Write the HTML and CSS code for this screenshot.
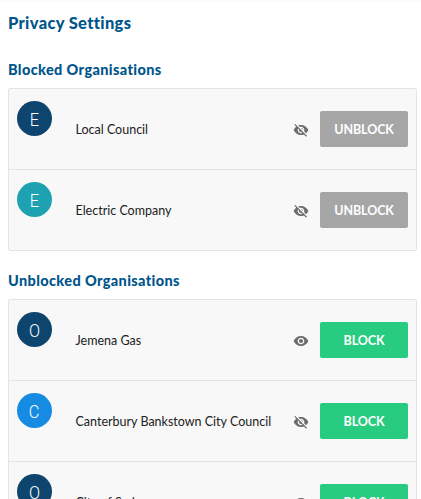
FILE: index.html
```html
<!DOCTYPE html>
<html lang="en">
<head>
    <meta charset="UTF-8">
    <meta name="viewport" content="width=device-width, initial-scale=1.0">
    <title>Privacy Settings</title>
    <link rel="stylesheet" href="styles.css">
</head>
<body>
    <svg class="sprite" aria-hidden="true">
        <symbol id="eye" viewBox="0 0 24 24">
            <path d="M12 4.5C7 4.5 2.73 7.61 1 12c1.73 4.39 6 7.5 11 7.5s9.27-3.11 11-7.5c-1.73-4.39-6-7.5-11-7.5zM12 17c-2.76 0-5-2.24-5-5s2.24-5 5-5 5 2.24 5 5-2.24 5-5 5zm0-8c-1.66 0-3 1.34-3 3s1.34 3 3 3 3-1.34 3-3-1.34-3-3-3z"/>
        </symbol>
        <symbol id="eye-off" viewBox="0 0 24 24">
            <path d="M12 7c2.76 0 5 2.24 5 5 0 .65-.13 1.26-.36 1.83l2.92 2.92c1.51-1.26 2.7-2.89 3.43-4.75-1.73-4.39-6-7.5-11-7.5-1.4 0-2.74.25-3.98.7l2.16 2.16C10.74 7.13 11.35 7 12 7zM2 4.27l2.28 2.28.46.46C3.08 8.3 1.78 10.02 1 12c1.73 4.39 6 7.5 11 7.5 1.55 0 3.03-.3 4.38-.84l.42.42L19.73 22 21 20.73 3.27 3 2 4.27zM7.53 9.8l1.55 1.55c-.05.21-.08.43-.08.65 0 1.66 1.34 3 3 3 .22 0 .44-.03.65-.08l1.55 1.55c-.67.33-1.41.53-2.2.53-2.76 0-5-2.24-5-5 0-.79.2-1.53.53-2.2zm4.31-.78l3.15 3.15.02-.16c0-1.66-1.34-3-3-3l-.17.01z"/>
        </symbol>
    </svg>

    <div class="page">
        <h1 class="page-title">Privacy Settings</h1>

        <h2 class="section-title">Blocked Organisations</h2>
        <ul class="org-list">
            <li class="org">
                <span class="avatar navy"><span class="initial">E</span></span>
                <span class="org-name">Local Council</span>
                <svg class="icon"><use href="#eye-off"/></svg>
                <button class="button grey">UNBLOCK</button>
            </li>
            <li class="org">
                <span class="avatar teal"><span class="initial">E</span></span>
                <span class="org-name">Electric Company</span>
                <svg class="icon"><use href="#eye-off"/></svg>
                <button class="button grey">UNBLOCK</button>
            </li>
        </ul>

        <h2 class="section-title">Unblocked Organisations</h2>
        <ul class="org-list">
            <li class="org">
                <span class="avatar navy"><span class="initial">O</span></span>
                <span class="org-name">Jemena Gas</span>
                <svg class="icon"><use href="#eye"/></svg>
                <button class="button green">BLOCK</button>
            </li>
            <li class="org">
                <span class="avatar blue"><span class="initial">C</span></span>
                <span class="org-name">Canterbury Bankstown City Council</span>
                <svg class="icon"><use href="#eye-off"/></svg>
                <button class="button green">BLOCK</button>
            </li>
            <li class="org">
                <span class="avatar navy"><span class="initial">O</span></span>
                <span class="org-name">City of Sydney</span>
                <svg class="icon"><use href="#eye"/></svg>
                <button class="button green">BLOCK</button>
            </li>
        </ul>
    </div>
</body>
</html>
```
FILE: styles.css
```css
* {
    margin: 0;
    padding: 0;
    box-sizing: border-box;
}

body {
    height: 100vh;
    overflow: hidden;
    background: #fff;
    color: #212121;
    font-family: Lato, "Open Sans", sans-serif;
}

.sprite {
    display: none;
}

.page {
    padding: 12px 4px 0 8px;
    background: linear-gradient(#f9f9f9, #fff 3px);
}

/* Headings */
.page-title {
    height: 22px;
    margin-bottom: 25px;
    color: #00558a;
    font-size: 16.5px;
    font-weight: 900;
    letter-spacing: 0.33px;
    line-height: 22px;
}

.section-title {
    height: 20px;
    margin-bottom: 9px;
    color: #00558a;
    font-size: 14.5px;
    font-weight: 900;
    letter-spacing: 0.37px;
    line-height: 22px;
}

/* Organisation list */
.org-list {
    margin-bottom: 19px;
    border: 1px solid #e4e4e4;
    border-radius: 2px;
    background: #f8f8f8;
    list-style: none;
}

.org {
    display: flex;
    align-items: center;
    height: 80px;
    padding: 0 8px;
}

.org + .org {
    height: 81px;
    border-top: 1px solid #e4e4e4;
}

.avatar {
    display: flex;
    align-self: flex-start;
    justify-content: center;
    flex: none;
    width: 35px;
    height: 35px;
    margin: 12px 23px 0 0;
    border-radius: 50%;
    color: #fff;
    font-family: Roboto, sans-serif;
    font-size: 19px;
    font-weight: 300;
    line-height: 37px;
}

.initial {
    transform: scaleX(0.86);
}

.avatar.navy {
    background: #0d456e;
}

.avatar.teal {
    background: #1ea1b0;
}

.avatar.blue {
    background: #158be2;
}

.org-name {
    flex: 1;
    padding: 2px 0 0 0.5px;
    font-size: 12.5px;
    line-height: 18px;
    white-space: nowrap;
}

.icon {
    flex: none;
    width: 16px;
    height: 16px;
    margin: 2px 11px 0 0;
    fill: #6c6c6c;
}

/* Buttons */
.button {
    flex: none;
    width: 88px;
    height: 36px;
    padding-top: 2px;
    border: none;
    border-radius: 2px;
    color: #fff;
    font-family: inherit;
    font-size: 12.5px;
    font-weight: 700;
    letter-spacing: -0.1px;
    line-height: 34px;
    cursor: pointer;
}

.button.grey {
    background: #a6a6a6;
}

.button.green {
    background: #28cc80;
}
```
